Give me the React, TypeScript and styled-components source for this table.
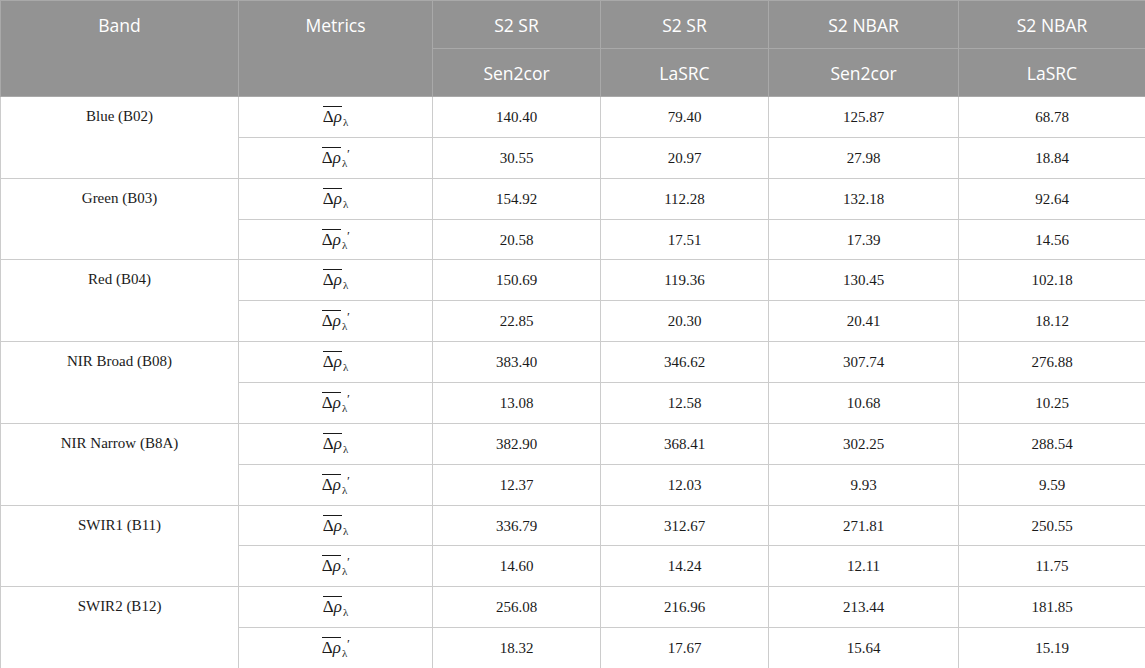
import React from "react";
import styled, { createGlobalStyle } from "styled-components";

const Global = createGlobalStyle`
  html, body { margin: 0; padding: 0; background: #ffffff; }
  #root { width: 1145px; height: 668px; overflow: hidden; }
`;

const Table = styled.table`
  width: 1145px;
  border-collapse: collapse;
  table-layout: fixed;
`;

const HeadCell = styled.th<{ $top?: boolean }>`
  background: #939393;
  color: #ffffff;
  font-family: "Open Sans", "Noto Sans", sans-serif;
  font-weight: 400;
  font-size: 17.5px;
  line-height: 24px;
  height: 48px;
  box-sizing: border-box;
  padding: 0 8px;
  text-align: center;
  vertical-align: ${(p) => (p.$top ? "top" : "middle")};
  padding-top: ${(p) => (p.$top ? "12px" : "0")};
  border: 1px solid #a9a9a9;
`;

const BodyCell = styled.td<{ $top?: boolean }>`
  font-family: "Liberation Serif", "DejaVu Serif", serif;
  font-size: 15px;
  color: #1a1a1a;
  line-height: 20px;
  height: 40.86px;
  box-sizing: border-box;
  padding: 0 8px;
  text-align: center;
  vertical-align: ${(p) => (p.$top ? "top" : "middle")};
  padding-top: ${(p) => (p.$top ? "9px" : "0")};
  border: 1px solid #cccccc;
`;

const Sym = styled.span`
  font-family: "Liberation Serif", "DejaVu Serif", serif;
  font-size: 17px;
  display: inline-flex;
  align-items: flex-start;
  color: #1a1a1a;
`;

const Over = styled.span`
  border-top: 1px solid #1a1a1a;
  line-height: 18px;
  padding-top: 1px;
`;

const Rho = styled.i`
  font-style: italic;
`;

const Lambda = styled.span`
  font-size: 11px;
  line-height: 11px;
  margin-left: 1px;
  padding-top: 11px;
`;

const Prime = styled.span`
  font-style: italic;
  font-size: 13px;
  line-height: 10px;
  padding-top: 2px;
  margin-left: -1px;
`;

function Metric({ prime }: { prime: boolean }) {
  return (
    <Sym>
      <Over>
        Δ<Rho>ρ</Rho>
      </Over>
      <Lambda>λ</Lambda>
      {prime && <Prime>′</Prime>}
    </Sym>
  );
}

const data: [string, string[], string[]][] = [
  ["Blue (B02)", ["140.40", "79.40", "125.87", "68.78"], ["30.55", "20.97", "27.98", "18.84"]],
  ["Green (B03)", ["154.92", "112.28", "132.18", "92.64"], ["20.58", "17.51", "17.39", "14.56"]],
  ["Red (B04)", ["150.69", "119.36", "130.45", "102.18"], ["22.85", "20.30", "20.41", "18.12"]],
  ["NIR Broad (B08)", ["383.40", "346.62", "307.74", "276.88"], ["13.08", "12.58", "10.68", "10.25"]],
  ["NIR Narrow (B8A)", ["382.90", "368.41", "302.25", "288.54"], ["12.37", "12.03", "9.93", "9.59"]],
  ["SWIR1 (B11)", ["336.79", "312.67", "271.81", "250.55"], ["14.60", "14.24", "12.11", "11.75"]],
  ["SWIR2 (B12)", ["256.08", "216.96", "213.44", "181.85"], ["18.32", "17.67", "15.64", "15.19"]],
];

export default function App() {
  return (
    <>
      <Global />
      <Table>
        <colgroup>
          <col style={{ width: 238 }} />
          <col style={{ width: 194 }} />
          <col style={{ width: 168 }} />
          <col style={{ width: 168 }} />
          <col style={{ width: 190 }} />
          <col style={{ width: 187 }} />
        </colgroup>
        <thead>
          <tr>
            <HeadCell rowSpan={2} $top>Band</HeadCell>
            <HeadCell rowSpan={2} $top>Metrics</HeadCell>
            <HeadCell>S2 SR</HeadCell>
            <HeadCell>S2 SR</HeadCell>
            <HeadCell>S2 NBAR</HeadCell>
            <HeadCell>S2 NBAR</HeadCell>
          </tr>
          <tr>
            <HeadCell>Sen2cor</HeadCell>
            <HeadCell>LaSRC</HeadCell>
            <HeadCell>Sen2cor</HeadCell>
            <HeadCell>LaSRC</HeadCell>
          </tr>
        </thead>
        <tbody>
          {data.map(([band, a, b]) => (
            <React.Fragment key={band}>
              <tr>
                <BodyCell rowSpan={2} $top>{band}</BodyCell>
                <BodyCell><Metric prime={false} /></BodyCell>
                {a.map((v, i) => (
                  <BodyCell key={i}>{v}</BodyCell>
                ))}
              </tr>
              <tr>
                <BodyCell><Metric prime={true} /></BodyCell>
                {b.map((v, i) => (
                  <BodyCell key={i}>{v}</BodyCell>
                ))}
              </tr>
            </React.Fragment>
          ))}
        </tbody>
      </Table>
    </>
  );
}
